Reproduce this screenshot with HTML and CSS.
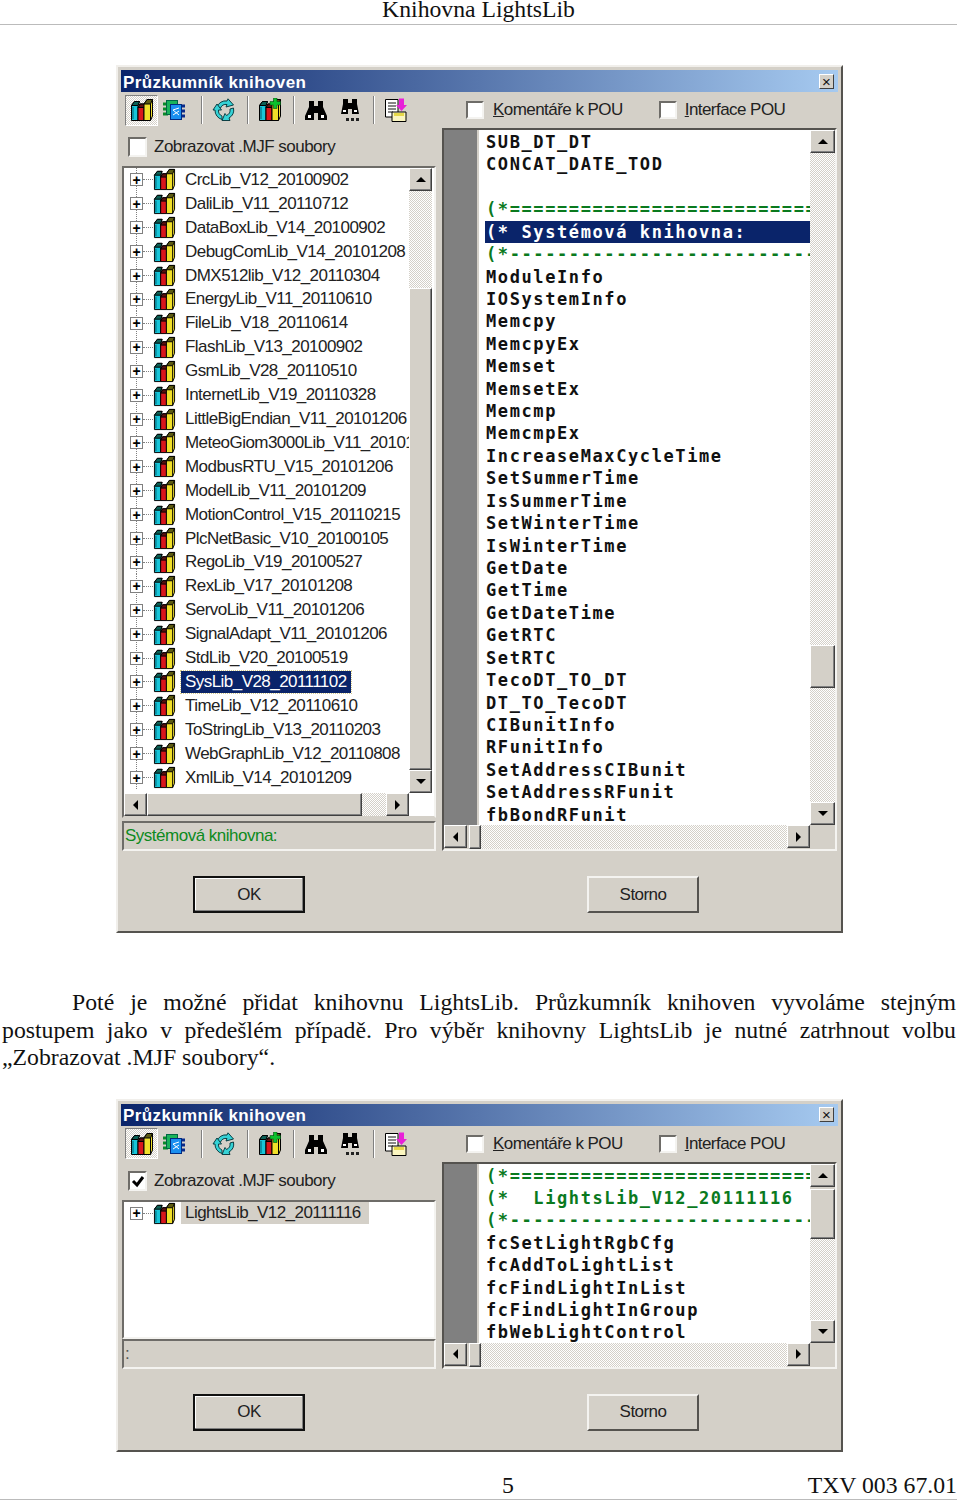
FILE: index.html
```html
<!DOCTYPE html>
<html>
<head>
  <meta charset="UTF-8">
  <title>Knihovna LightsLib</title>
  <link rel="stylesheet" href="styles.css">
</head>
<body>
  <svg class="defs" width="0" height="0">
    <symbol id="books" viewBox="0 0 24 24">
      <path d="M1.5 7.5 4.5 3.5H9.5L8 7.5V22.5H1.5Z" fill="#17c5d8" stroke="#000"/>
      <path d="M1.5 7.5 4.5 3.5H9.5L8 7.5Z" fill="#0c5f55" stroke="#000"/>
      <path d="M3 9V21" stroke="#0a7f92" stroke-width="1.5"/>
      <path d="M8 9.5 10 6H15.5L14 9.5V22.5H8Z" fill="#d9161c" stroke="#000"/>
      <path d="M8 9.5 10 6H15.5L14 9.5Z" fill="#5b1010" stroke="#000"/>
      <path d="M14 6 17 1.5H22.5V18L20.5 22.5H14Z" fill="#f1e02a" stroke="#000"/>
      <path d="M14 6 17 1.5H22.5L20.5 6Z" fill="#5c5a12" stroke="#000"/>
      <path d="M20.5 6V22.5" stroke="#000"/>
    </symbol>
    <symbol id="chip" viewBox="0 0 24 24">
      <path d="M1 6H6M1 11H6M1 16H6" stroke="#0a8a2a" stroke-width="3"/>
      <path d="M18 8H23M18 13H23M18 18H23" stroke="#0a2a8a" stroke-width="3"/>
      <rect x="4.5" y="2.5" width="11" height="14" fill="#19b35a" stroke="#064"/>
      <rect x="8.5" y="6.5" width="11" height="15" fill="#1a8ff0" stroke="#012a80"/>
      <path d="M11 12 17 10M11 17 17 13M11 12 17 17" stroke="#fff"/>
    </symbol>
    <symbol id="recycle" viewBox="0 0 24 24">
      <g fill="#35d2d6" stroke="#0b3f44">
        <path d="M5 9A9 9 0 0 1 15 3L16 .8 21.5 7 14 9 15 6.5A6 6 0 0 0 8.5 10Z"/>
        <path d="M21.5 10A9.5 9.5 0 0 1 17 20L18 22.5H10L13 15.5 14.5 17.5A6 6 0 0 0 18 11Z"/>
        <path d="M10 21.5A9.5 9.5 0 0 1 3 12H1L5 6 9.5 12H6.5A6 6 0 0 0 10 18Z"/>
      </g>
    </symbol>
    <symbol id="books-add" viewBox="0 0 24 24">
      <use href="#books"/>
      <path d="M15.5 0H19V3.5H22.5V7H19V10.5H15.5V7H12V3.5H15.5Z" fill="#0cc02c" stroke="#064a14" stroke-width=".6"/>
    </symbol>
    <symbol id="binoculars" viewBox="0 0 24 24">
      <path d="M5 3H10V8H14V3H19V9L23 18V22H14V15H10V22H1V18L5 9Z" fill="#000"/>
      <path d="M4 17H7V20H4ZM17 17H20V20H17Z" fill="#fff"/>
    </symbol>
    <symbol id="binoculars-more" viewBox="0 0 24 24">
      <path d="M5 1H10V5H14V1H19V6L21 16H14V11H10V16H3L5 6Z" fill="#000"/>
      <path d="M5 12H8V14H5ZM16 12H19V14H16Z" fill="#fff"/>
      <path d="M8 20H11V23H8ZM13 20H16V23H13ZM18 20H21V23H18Z" fill="#222"/>
    </symbol>
    <symbol id="document" viewBox="0 0 24 24">
      <path d="M1.5 1.5H14V19H1.5Z" fill="#fff" stroke="#000"/>
      <path d="M4 5H12M4 8H12M4 11H12M4 14H9" stroke="#111"/>
      <path d="M15 .5H20V7H23L17.5 13 12 7H15Z" fill="#e820d8"/>
      <path d="M8 14H22V23.5H8Z" fill="#fbf6c0" stroke="#000"/>
      <path d="M10 15H20V18H10Z" fill="#e6d84a"/>
    </symbol>
  </svg>

  <header class="page-header">Knihovna LightsLib</header>

  <section class="dialog dialog-full">
    <div class="titlebar">
      <span class="title-text">Průzkumník knihoven</span>
      <span class="close-btn">×</span>
    </div>
    <div class="toolbar">
      <span class="tool tool-pressed"><svg class="tool-icon"><use href="#books"/></svg></span>
      <span class="tool tool-chip"><svg class="tool-icon"><use href="#chip"/></svg></span>
      <span class="sep sep-first"></span>
      <span class="tool"><svg class="tool-icon"><use href="#recycle"/></svg></span>
      <span class="sep"></span>
      <span class="tool"><svg class="tool-icon"><use href="#books-add"/></svg></span>
      <span class="sep"></span>
      <span class="tool"><svg class="tool-icon"><use href="#binoculars"/></svg></span>
      <span class="tool tool-far"><svg class="tool-icon"><use href="#binoculars-more"/></svg></span>
      <span class="sep"></span>
      <span class="tool"><svg class="tool-icon"><use href="#document"/></svg></span>
      <label class="option option-comments"><span class="check"></span><span><u>K</u>omentáře k POU</span></label>
      <label class="option option-interface"><span class="check"></span><span><u>I</u>nterface POU</span></label>
    </div>
    <div class="panes">
      <div class="left-pane">
        <label class="mjf-row"><span class="check check-large"></span><span>Zobrazovat .MJF soubory</span></label>
        <div class="tree-box">
          <div class="tree-main">
            <ul class="tree">
              <li class="tree-row"><span class="expander">+</span><span class="connector"></span><svg class="book-icon"><use href="#books"/></svg><span class="tree-label">CrcLib_V12_20100902</span></li>
              <li class="tree-row"><span class="expander">+</span><span class="connector"></span><svg class="book-icon"><use href="#books"/></svg><span class="tree-label">DaliLib_V11_20110712</span></li>
              <li class="tree-row"><span class="expander">+</span><span class="connector"></span><svg class="book-icon"><use href="#books"/></svg><span class="tree-label">DataBoxLib_V14_20100902</span></li>
              <li class="tree-row"><span class="expander">+</span><span class="connector"></span><svg class="book-icon"><use href="#books"/></svg><span class="tree-label">DebugComLib_V14_20101208</span></li>
              <li class="tree-row"><span class="expander">+</span><span class="connector"></span><svg class="book-icon"><use href="#books"/></svg><span class="tree-label">DMX512lib_V12_20110304</span></li>
              <li class="tree-row"><span class="expander">+</span><span class="connector"></span><svg class="book-icon"><use href="#books"/></svg><span class="tree-label">EnergyLib_V11_20110610</span></li>
              <li class="tree-row"><span class="expander">+</span><span class="connector"></span><svg class="book-icon"><use href="#books"/></svg><span class="tree-label">FileLib_V18_20110614</span></li>
              <li class="tree-row"><span class="expander">+</span><span class="connector"></span><svg class="book-icon"><use href="#books"/></svg><span class="tree-label">FlashLib_V13_20100902</span></li>
              <li class="tree-row"><span class="expander">+</span><span class="connector"></span><svg class="book-icon"><use href="#books"/></svg><span class="tree-label">GsmLib_V28_20110510</span></li>
              <li class="tree-row"><span class="expander">+</span><span class="connector"></span><svg class="book-icon"><use href="#books"/></svg><span class="tree-label">InternetLib_V19_20110328</span></li>
              <li class="tree-row"><span class="expander">+</span><span class="connector"></span><svg class="book-icon"><use href="#books"/></svg><span class="tree-label">LittleBigEndian_V11_20101206</span></li>
              <li class="tree-row"><span class="expander">+</span><span class="connector"></span><svg class="book-icon"><use href="#books"/></svg><span class="tree-label">MeteoGiom3000Lib_V11_20101</span></li>
              <li class="tree-row"><span class="expander">+</span><span class="connector"></span><svg class="book-icon"><use href="#books"/></svg><span class="tree-label">ModbusRTU_V15_20101206</span></li>
              <li class="tree-row"><span class="expander">+</span><span class="connector"></span><svg class="book-icon"><use href="#books"/></svg><span class="tree-label">ModelLib_V11_20101209</span></li>
              <li class="tree-row"><span class="expander">+</span><span class="connector"></span><svg class="book-icon"><use href="#books"/></svg><span class="tree-label">MotionControl_V15_20110215</span></li>
              <li class="tree-row"><span class="expander">+</span><span class="connector"></span><svg class="book-icon"><use href="#books"/></svg><span class="tree-label">PlcNetBasic_V10_20100105</span></li>
              <li class="tree-row"><span class="expander">+</span><span class="connector"></span><svg class="book-icon"><use href="#books"/></svg><span class="tree-label">RegoLib_V19_20100527</span></li>
              <li class="tree-row"><span class="expander">+</span><span class="connector"></span><svg class="book-icon"><use href="#books"/></svg><span class="tree-label">RexLib_V17_20101208</span></li>
              <li class="tree-row"><span class="expander">+</span><span class="connector"></span><svg class="book-icon"><use href="#books"/></svg><span class="tree-label">ServoLib_V11_20101206</span></li>
              <li class="tree-row"><span class="expander">+</span><span class="connector"></span><svg class="book-icon"><use href="#books"/></svg><span class="tree-label">SignalAdapt_V11_20101206</span></li>
              <li class="tree-row"><span class="expander">+</span><span class="connector"></span><svg class="book-icon"><use href="#books"/></svg><span class="tree-label">StdLib_V20_20100519</span></li>
              <li class="tree-row"><span class="expander">+</span><span class="connector"></span><svg class="book-icon"><use href="#books"/></svg><span class="tree-label tree-selected">SysLib_V28_20111102</span></li>
              <li class="tree-row"><span class="expander">+</span><span class="connector"></span><svg class="book-icon"><use href="#books"/></svg><span class="tree-label">TimeLib_V12_20110610</span></li>
              <li class="tree-row"><span class="expander">+</span><span class="connector"></span><svg class="book-icon"><use href="#books"/></svg><span class="tree-label">ToStringLib_V13_20110203</span></li>
              <li class="tree-row"><span class="expander">+</span><span class="connector"></span><svg class="book-icon"><use href="#books"/></svg><span class="tree-label">WebGraphLib_V12_20110808</span></li>
              <li class="tree-row"><span class="expander">+</span><span class="connector"></span><svg class="book-icon"><use href="#books"/></svg><span class="tree-label">XmlLib_V14_20101209</span></li>
            </ul>
            <div class="vscroll tree-vscroll">
              <span class="sb-btn"><i class="arrow arrow-up"></i></span>
              <span class="track track-tree-top"></span>
              <span class="thumb thumb-fill"></span>
              <span class="sb-btn"><i class="arrow arrow-down"></i></span>
            </div>
          </div>
          <div class="hscroll tree-hscroll">
            <span class="sb-btn"><i class="arrow arrow-left"></i></span>
            <span class="thumb thumb-tree-h"></span>
            <span class="track track-fill"></span>
            <span class="sb-btn"><i class="arrow arrow-right"></i></span>
          </div>
        </div>
        <div class="status-bar">Systémová knihovna:</div>
      </div>
      <div class="code-pane">
        <div class="code-body">
          <div class="gutter"></div>
          <div class="code-list">
            <div class="code-line">SUB_DT_DT</div>
            <div class="code-line">CONCAT_DATE_TOD</div>
            <div class="code-line">&nbsp;</div>
            <div class="code-line code-comment">(*==========================================</div>
            <div class="code-line code-selected">(* Systémová knihovna:</div>
            <div class="code-line code-comment">(*------------------------------------------</div>
            <div class="code-line">ModuleInfo</div>
            <div class="code-line">IOSystemInfo</div>
            <div class="code-line">Memcpy</div>
            <div class="code-line">MemcpyEx</div>
            <div class="code-line">Memset</div>
            <div class="code-line">MemsetEx</div>
            <div class="code-line">Memcmp</div>
            <div class="code-line">MemcmpEx</div>
            <div class="code-line">IncreaseMaxCycleTime</div>
            <div class="code-line">SetSummerTime</div>
            <div class="code-line">IsSummerTime</div>
            <div class="code-line">SetWinterTime</div>
            <div class="code-line">IsWinterTime</div>
            <div class="code-line">GetDate</div>
            <div class="code-line">GetTime</div>
            <div class="code-line">GetDateTime</div>
            <div class="code-line">GetRTC</div>
            <div class="code-line">SetRTC</div>
            <div class="code-line">TecoDT_TO_DT</div>
            <div class="code-line">DT_TO_TecoDT</div>
            <div class="code-line">CIBunitInfo</div>
            <div class="code-line">RFunitInfo</div>
            <div class="code-line">SetAddressCIBunit</div>
            <div class="code-line">SetAddressRFunit</div>
            <div class="code-line">fbBondRFunit</div>
          </div>
        </div>
        <div class="vscroll code-vscroll">
          <span class="sb-btn"><i class="arrow arrow-up"></i></span>
          <span class="track track-code-top"></span>
          <span class="thumb thumb-code"></span>
          <span class="track track-fill"></span>
          <span class="sb-btn"><i class="arrow arrow-down"></i></span>
        </div>
        <div class="hscroll code-hscroll">
          <span class="sb-btn"><i class="arrow arrow-left"></i></span>
          <span class="thumb thumb-code-h"></span>
          <span class="track track-fill"></span>
          <span class="sb-btn"><i class="arrow arrow-right"></i></span>
        </div>
      </div>
    </div>
    <div class="actions">
      <span class="btn btn-default">OK</span>
      <span class="btn">Storno</span>
    </div>
  </section>

  <p class="body-text">Poté je možné přidat knihovnu LightsLib. Průzkumník knihoven vyvoláme stejným postupem jako v předešlém případě. Pro výběr knihovny LightsLib je nutné zatrhnout volbu „Zobrazovat .MJF soubory“.</p>

  <section class="dialog dialog-short">
    <div class="titlebar">
      <span class="title-text">Průzkumník knihoven</span>
      <span class="close-btn">×</span>
    </div>
    <div class="toolbar">
      <span class="tool tool-pressed"><svg class="tool-icon"><use href="#books"/></svg></span>
      <span class="tool tool-chip"><svg class="tool-icon"><use href="#chip"/></svg></span>
      <span class="sep sep-first"></span>
      <span class="tool"><svg class="tool-icon"><use href="#recycle"/></svg></span>
      <span class="sep"></span>
      <span class="tool"><svg class="tool-icon"><use href="#books-add"/></svg></span>
      <span class="sep"></span>
      <span class="tool"><svg class="tool-icon"><use href="#binoculars"/></svg></span>
      <span class="tool tool-far"><svg class="tool-icon"><use href="#binoculars-more"/></svg></span>
      <span class="sep"></span>
      <span class="tool"><svg class="tool-icon"><use href="#document"/></svg></span>
      <label class="option option-comments"><span class="check"></span><span><u>K</u>omentáře k POU</span></label>
      <label class="option option-interface"><span class="check"></span><span><u>I</u>nterface POU</span></label>
    </div>
    <div class="panes">
      <div class="left-pane">
        <label class="mjf-row"><span class="check check-large check-on"><svg class="tick" viewBox="0 0 14 14"><path d="M2 7 6 11 12 3" fill="none" stroke="#000" stroke-width="3"/></svg></span><span>Zobrazovat .MJF soubory</span></label>
        <div class="tree-box tree-box-plain">
          <ul class="tree tree-single">
            <li class="tree-row"><span class="expander">+</span><span class="connector"></span><svg class="book-icon"><use href="#books"/></svg><span class="tree-label tree-inactive">LightsLib_V12_20111116</span></li>
          </ul>
        </div>
        <div class="status-bar">:</div>
      </div>
      <div class="code-pane">
        <div class="code-body">
          <div class="gutter"></div>
          <div class="code-list">
            <div class="code-line code-comment">(*==========================================</div>
            <div class="code-line code-comment">(*  LightsLib_V12_20111116</div>
            <div class="code-line code-comment">(*------------------------------------------</div>
            <div class="code-line">fcSetLightRgbCfg</div>
            <div class="code-line">fcAddToLightList</div>
            <div class="code-line">fcFindLightInList</div>
            <div class="code-line">fcFindLightInGroup</div>
            <div class="code-line">fbWebLightControl</div>
          </div>
        </div>
        <div class="vscroll code-vscroll">
          <span class="sb-btn"><i class="arrow arrow-up"></i></span>
          <span class="thumb thumb-code-short"></span>
          <span class="track track-fill"></span>
          <span class="sb-btn"><i class="arrow arrow-down"></i></span>
        </div>
        <div class="hscroll code-hscroll">
          <span class="sb-btn"><i class="arrow arrow-left"></i></span>
          <span class="thumb thumb-code-h"></span>
          <span class="track track-fill"></span>
          <span class="sb-btn"><i class="arrow arrow-right"></i></span>
        </div>
      </div>
    </div>
    <div class="actions">
      <span class="btn btn-default">OK</span>
      <span class="btn">Storno</span>
    </div>
  </section>

  <footer class="page-footer">
    <span class="page-number">5</span>
    <span class="doc-number">TXV 003 67.01</span>
  </footer>
</body>
</html>
```

FILE: styles.css
```css
* {
  box-sizing: border-box;
}

body {
  margin: 0;
  background-color: #fff;
  color: #111;
  font-family: 'Liberation Serif', serif;
}

.defs {
  display: block;
  height: 0;
}

/* page text */

.page-header {
  width: 957px;
  height: 25px;
  font-size: 23.7px;
  line-height: 18px;
  text-align: center;
  border-bottom: 1px solid #bbb;
}

.body-text {
  margin: 56px 4px 27px 2px;
  font-size: 23.75px;
  line-height: 27.5px;
  text-align: justify;
  text-indent: 70px;
}

.page-footer {
  display: flex;
  width: 957px;
  height: 26px;
  margin-top: 22px;
  padding-left: 502px;
  font-size: 23.75px;
  line-height: 22px;
  border-bottom: 1px solid #bbb;
}

.doc-number {
  margin-left: auto;
}

/* dialog frame */

.dialog {
  display: flex;
  flex-direction: column;
  width: 727px;
  margin-left: 116px;
  padding: 3px 3px 0 3px;
  background-color: #d4d0c8;
  border: 2px solid;
  border-color: #f1efeb #55534f #55534f #f1efeb;
  font-family: 'Liberation Sans', sans-serif;
  color: #222;
}

.dialog-full {
  height: 868px;
  margin-top: 40px;
}

.dialog-short {
  height: 353px;
}

.titlebar {
  display: flex;
  align-items: center;
  justify-content: space-between;
  flex: none;
  height: 22px;
  padding: 0 4px 0 2px;
  background: linear-gradient(to right, #0a246a, #a6caf0);
}

.title-text {
  padding-top: 3px;
  color: #fff;
  font-size: 17px;
  font-weight: bold;
  letter-spacing: 0.4px;
}

.close-btn {
  display: flex;
  align-items: center;
  justify-content: center;
  width: 15px;
  height: 15px;
  background-color: #d4d0c8;
  border: 1px solid;
  border-color: #fff #404040 #404040 #fff;
  color: #111;
  font-size: 15px;
  line-height: 1;
}

/* toolbar */

.toolbar {
  display: flex;
  align-items: center;
  flex: none;
  height: 36px;
  padding-left: 4px;
  font-size: 17px;
  letter-spacing: -0.55px;
}

.tool {
  display: flex;
  align-items: center;
  justify-content: center;
  width: 24px;
  height: 31px;
}

.tool-pressed {
  width: 33px;
  background: repeating-conic-gradient(#fff 0 25%, #d4d0c8 0 50%) 0 0 / 2px 2px;
  border: 1px solid;
  border-color: #808080 #fff #fff #808080;
}

.tool-chip {
  margin-left: 4px;
}

.tool-far {
  margin-left: 10px;
}

.tool-icon {
  width: 24px;
  height: 24px;
}

.sep {
  width: 2px;
  height: 28px;
  margin: 0 9px 0 11px;
  background-color: #fff;
  border-left: 1px solid #808080;
}

.sep-first {
  margin-left: 15px;
}

.option {
  display: flex;
  align-items: center;
  gap: 9px;
}

.option-comments {
  margin-left: 58px;
}

.option-interface {
  margin-left: 36px;
  gap: 8px;
}

.check {
  display: flex;
  align-items: center;
  justify-content: center;
  flex: none;
  width: 18px;
  height: 18px;
  background-color: #fff;
  border: 2px solid;
  border-color: #6e6c68 #f4f3f0 #f4f3f0 #6e6c68;
}

.check-large {
  width: 19px;
  height: 20px;
}

.tick {
  width: 14px;
  height: 14px;
}

/* panes */

.panes {
  display: grid;
  grid-template-columns: 314px 395px;
  gap: 6px;
  flex: 1;
  min-height: 0;
  padding-left: 1px;
}

.left-pane {
  display: flex;
  flex-direction: column;
  min-height: 0;
}

.mjf-row {
  display: flex;
  align-items: center;
  gap: 7px;
  flex: none;
  height: 38px;
  padding-left: 6px;
  font-size: 17px;
  letter-spacing: -0.5px;
}

.tree-box {
  display: flex;
  flex-direction: column;
  flex: 1;
  min-height: 0;
  background-color: #fff;
  border: 2px solid;
  border-color: #6e6c68 #f4f3f0 #d4d0c8 #6e6c68;
}

.tree-box-plain {
  border-bottom-color: #f4f3f0;
}

.tree-main {
  display: flex;
  flex: 1;
  min-height: 0;
}

.tree {
  flex: 1;
  min-width: 0;
  margin: 0;
  padding: 0;
  list-style: none;
  overflow: hidden;
}

.tree-row {
  display: flex;
  align-items: center;
  height: 23.92px;
  padding-left: 6px;
  font-size: 17px;
  letter-spacing: -0.55px;
  white-space: nowrap;
  background: linear-gradient(#808080 50%, transparent 50%) 12px 0 / 1px 2px repeat-y;
}

.tree-single .tree-row {
  background: none;
}

.expander {
  display: flex;
  align-items: center;
  justify-content: center;
  flex: none;
  width: 13px;
  height: 13px;
  background-color: #fff;
  border: 1px solid #808080;
  color: #000;
  font-size: 14px;
  font-weight: bold;
  letter-spacing: 0;
  line-height: 1;
}

.connector {
  flex: none;
  width: 10px;
  border-top: 1px dotted #808080;
}

.book-icon {
  flex: none;
  width: 23px;
  height: 23px;
}

.tree-label {
  margin-left: 7px;
  padding: 0 2px;
  line-height: 22px;
}

.tree-selected {
  margin-left: 5px;
  padding: 0 4px;
  background-color: #0a246a;
  color: #fff;
  outline: 1px dotted #d4c98a;
}

.tree-inactive {
  margin-left: 5px;
  padding: 0 8px 0 4px;
  background-color: #d4d0c8;
}

.status-bar {
  flex: none;
  height: 30px;
  margin-top: 3px;
  padding-left: 1px;
  border: 2px solid;
  border-color: #6e6c68 #f4f3f0 #f4f3f0 #6e6c68;
  font-size: 17px;
  letter-spacing: -0.5px;
  line-height: 26px;
  color: #0d8a20;
}

.dialog-short .status-bar {
  margin-top: 0;
  color: #555;
}

/* source list on the right */

.code-pane {
  display: grid;
  grid-template-columns: 1fr 25px;
  grid-template-rows: 1fr 24px;
  min-height: 0;
  background-color: #d4d0c8;
  border: 2px solid;
  border-color: #55534f #f4f3f0 #f4f3f0 #55534f;
}

.code-body {
  display: flex;
  min-height: 0;
  min-width: 0;
  background-color: #fff;
}

.gutter {
  flex: none;
  width: 35px;
  background-color: #808080;
  border-right: 2px solid #d4d0c8;
}

.code-list {
  flex: 1;
  min-width: 0;
  padding: 1px 0 0 6px;
  overflow: hidden;
}

.code-line {
  height: 22.43px;
  padding-left: 1px;
  font-family: 'DejaVu Sans Mono', monospace;
  font-size: 17px;
  font-weight: bold;
  letter-spacing: 1.6px;
  line-height: 22.43px;
  white-space: pre;
  color: #111;
}

.code-comment {
  color: #0a7a1e;
}

.code-selected {
  background-color: #0a246a;
  color: #fff;
}

/* scrollbars */

.vscroll {
  display: flex;
  flex-direction: column;
  min-height: 0;
}

.hscroll {
  display: flex;
  min-width: 0;
}

.tree-vscroll {
  flex: none;
  width: 23px;
  margin-right: 2px;
}

.tree-hscroll {
  flex: none;
  height: 23px;
  margin-right: 25px;
}

.code-vscroll {
  grid-column: 2;
  grid-row: 1;
}

.code-hscroll {
  grid-column: 1;
  grid-row: 2;
}

.sb-btn,
.thumb {
  flex: none;
  background-color: #d4d0c8;
  border: 1px solid;
  border-color: #fff #404040 #404040 #fff;
  box-shadow: inset -1px -1px 0 #808080;
}

.sb-btn {
  display: flex;
  align-items: center;
  justify-content: center;
  width: 23px;
  height: 23px;
}

.track {
  flex: none;
  background: repeating-conic-gradient(#fff 0 25%, #d4d0c8 0 50%) 0 0 / 2px 2px;
}

.track-fill {
  flex: 1;
}

.track-tree-top {
  height: 97px;
}

.track-code-top {
  height: 492px;
}

.thumb-fill {
  flex: 1;
}

.thumb-tree-h {
  width: 215px;
}

.thumb-code {
  height: 43px;
}

.thumb-code-short {
  height: 50px;
  margin-top: 2px;
}

.thumb-code-h {
  width: 12px;
  margin-left: 2px;
}

.code-vscroll .sb-btn {
  width: 100%;
}

.arrow {
  width: 0;
  height: 0;
  border: 5px solid transparent;
}

.arrow-up {
  margin-top: -5px;
  border-bottom: 5px solid #000;
}

.arrow-down {
  margin-top: 5px;
  border-top: 5px solid #000;
}

.arrow-left {
  margin-left: -5px;
  border-right: 5px solid #000;
}

.arrow-right {
  margin-left: 5px;
  border-left: 5px solid #000;
}

/* buttons */

.actions {
  display: flex;
  justify-content: space-between;
  flex: none;
  height: 80px;
  padding: 25px 139px 0 72px;
}

.dialog-short .actions {
  height: 81px;
}

.btn {
  display: flex;
  align-items: center;
  justify-content: center;
  width: 112px;
  height: 37px;
  background-color: #d4d0c8;
  border: 2px solid;
  border-color: #f4f3f0 #55534f #55534f #f4f3f0;
  font-size: 17px;
  letter-spacing: -0.55px;
}

.btn-default {
  border: 2px solid #111;
  box-shadow: inset -1px -1px 0 #808080, inset 1px 1px 0 #fff;
}
```
